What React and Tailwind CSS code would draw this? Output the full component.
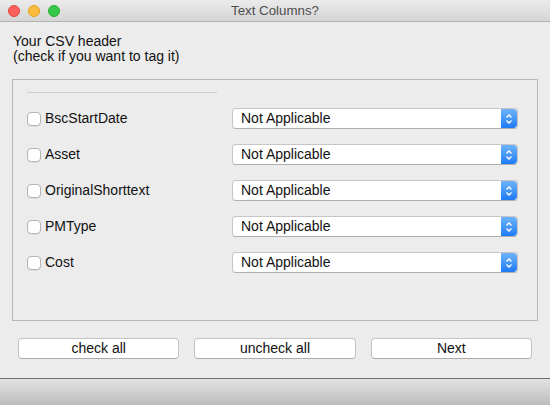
const fields = ['BscStartDate', 'Asset', 'OriginalShorttext', 'PMType', 'Cost']

function Stepper() {
  return (
    <span className="flex h-full w-[16px] items-center justify-center rounded-r-[4px] bg-gradient-to-b from-[#6cb3fa] to-[#1a7bf5]">
      <svg width="8" height="12" viewBox="0 0 8 12" fill="none" stroke="white" strokeWidth="1.3">
        <path d="M1.5 4.5 L4 2 L6.5 4.5" />
        <path d="M1.5 7.5 L4 10 L6.5 7.5" />
      </svg>
    </span>
  )
}

function Row({ name }) {
  return (
    <div className="flex h-[21px] items-center">
      <label className="flex w-[205px] items-center gap-[4px]">
        <span className="h-[14px] w-[14px] rounded-[4px] border border-[#b4b4b4] bg-white shadow-[0_0.5px_0.5px_rgba(0,0,0,0.08)]" />
        <span className="text-[#111]">{name}</span>
      </label>
      <div className="flex h-[21px] w-[286px] items-center rounded-[4px] border border-[#c6c6c6] border-b-[#b0b0b0] bg-white">
        <span className="flex-1 pl-[8px] text-[#111]">Not Applicable</span>
        <Stepper />
      </div>
    </div>
  )
}

function Button({ children }) {
  return (
    <button className="h-[21px] flex-1 rounded-[4px] border border-[#c4c4c4] border-b-[#ababab] bg-white text-[14px] leading-[15px] text-[#111]">
      {children}
    </button>
  )
}

export default function App() {
  return (
    <div className="flex h-[405px] w-[550px] flex-col bg-[#ececec] text-[14px] leading-[15px] font-['Liberation_Sans',Arial,sans-serif]">
      <header className="grid h-[22px] grid-cols-[1fr_auto_1fr] items-center border-b border-[#b3b3b3] bg-gradient-to-b from-[#ebebeb] to-[#d5d5d5]">
        <div className="flex items-center gap-[8px] pl-[8px]">
          <span className="h-[12px] w-[12px] rounded-full border border-[#e2463f] bg-[#fc605c]" />
          <span className="h-[12px] w-[12px] rounded-full border border-[#e1a116] bg-[#fdbc40]" />
          <span className="h-[12px] w-[12px] rounded-full border border-[#2dac2f] bg-[#34c84a]" />
        </div>
        <span className="text-[13.3px] text-[#4d4d4d]">Text Columns?</span>
        <div />
      </header>

      <main className="flex flex-1 flex-col px-[12px] pt-[12px]">
        <p className="pl-[1px] text-[#111]">
          Your CSV header
          <br />
          (check if you want to tag it)
        </p>

        <section className="mt-[15px] h-[242px] border border-[#b8b8b8] pt-[12px] pl-[14px]">
          <div className="h-px w-[190px] bg-[#cdcdcd]" />
          <div className="mt-[15px] flex flex-col gap-[15px]">
            {fields.map((f) => (
              <Row key={f} name={f} />
            ))}
          </div>
        </section>

        <div className="mt-[17px] flex gap-[15px] px-[6px]">
          <Button>check all</Button>
          <Button>uncheck all</Button>
          <Button>Next</Button>
        </div>
      </main>

      <footer className="h-[27px] border-t border-[#6e6e6e] bg-gradient-to-b from-[#e3e3e3] to-[#bcbcbc]" />
    </div>
  )
}
